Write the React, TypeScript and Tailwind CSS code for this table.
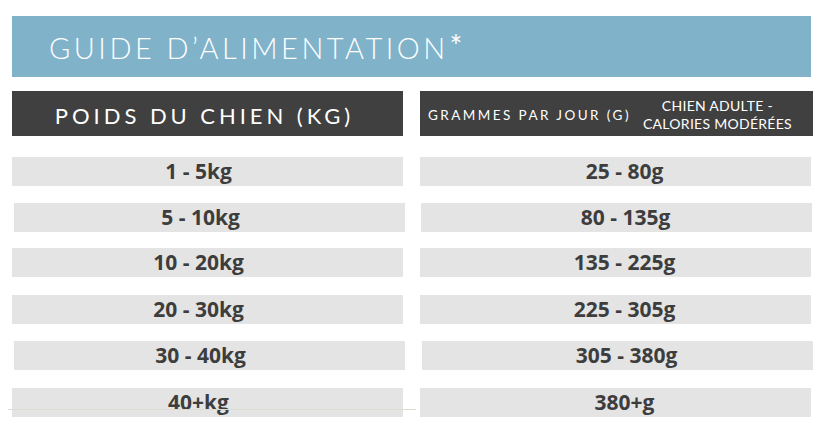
import React from "react";

const rows: { l: string; r: string; mt: string; lml: string; rml: string }[] = [
  { l: "1 - 5kg", r: "25 - 80g", mt: "mt-[21px]", lml: "ml-[12px]", rml: "ml-[17px]" },
  { l: "5 - 10kg", r: "80 - 135g", mt: "mt-[17px]", lml: "ml-[14px]", rml: "ml-[16px]" },
  { l: "10 - 20kg", r: "135 - 225g", mt: "mt-[16px]", lml: "ml-[12px]", rml: "ml-[17px]" },
  { l: "20 - 30kg", r: "225 - 305g", mt: "mt-[18px]", lml: "ml-[12px]", rml: "ml-[17px]" },
  { l: "30 - 40kg", r: "305 - 380g", mt: "mt-[17px]", lml: "ml-[14px]", rml: "ml-[17px]" },
  { l: "40+kg", r: "380+g", mt: "mt-[18px]", lml: "ml-[12px]", rml: "ml-[17px]" },
];

export default function App() {
  return (
    <div className="relative w-[826px] h-[436px] bg-white overflow-hidden">
      <div className="pt-[16px]">
        <div
          className="ml-[12px] w-[799px] h-[61px] bg-[#80b3ca] flex items-center pl-[37px] text-white"
          style={{ fontFamily: "Lato, 'Open Sans', sans-serif" }}
        >
          <span className="text-[29px] font-light tracking-[0.12em] leading-none pt-[1px]">
            GUIDE D’ALIMENTATION
          </span>
          <span className="text-[30px] font-normal leading-none ml-[1px] -mt-[4px]">*</span>
        </div>

        <div className="flex mt-[14px]">
          <div className="ml-[12px] w-[391px] h-[45px] bg-[#404040] flex items-center justify-center pt-[4px] pr-[6px]">
            <span
              className="text-white text-[22px] tracking-[0.18em] leading-none"
              style={{ fontFamily: "Lato, 'Open Sans', sans-serif" }}
            >
              POIDS DU CHIEN (KG)
            </span>
          </div>
          <div
            className="ml-[17px] w-[393px] h-[45px] bg-[#404040] flex items-center text-white"
            style={{ fontFamily: "Lato, 'Open Sans', sans-serif" }}
          >
            <span className="ml-[8px] text-[13.5px] tracking-[0.18em] leading-none pt-[4px] whitespace-nowrap">
              GRAMMES PAR JOUR (G)
            </span>
            <div className="ml-[12px] flex flex-col items-center text-[14px] leading-[18px] tracking-[0.02em] whitespace-nowrap pt-[2px]">
              <span>CHIEN ADULTE -</span>
              <span>CALORIES MODÉRÉES</span>
            </div>
          </div>
        </div>

        {rows.map((row) => (
          <div key={row.l} className={`flex ${row.mt}`}>
            <div
              className={`${row.lml} w-[391px] h-[29px] bg-[#e4e4e4] flex items-center justify-center pr-[18px] text-[21px] font-bold text-[#3d3d3d] leading-none`}
              style={{ fontFamily: "'Open Sans', sans-serif" }}
            >
              {row.l}
            </div>
            <div
              className={`${row.rml} w-[391px] h-[29px] bg-[#e4e4e4] flex items-center justify-center pl-[18px] text-[21px] font-bold text-[#3d3d3d] leading-none`}
              style={{ fontFamily: "'Open Sans', sans-serif" }}
            >
              {row.r}
            </div>
          </div>
        ))}
      </div>
      <div className="absolute left-[8px] top-[409px] w-[408px] h-px bg-[#dcdcd0]" />
    </div>
  );
}
